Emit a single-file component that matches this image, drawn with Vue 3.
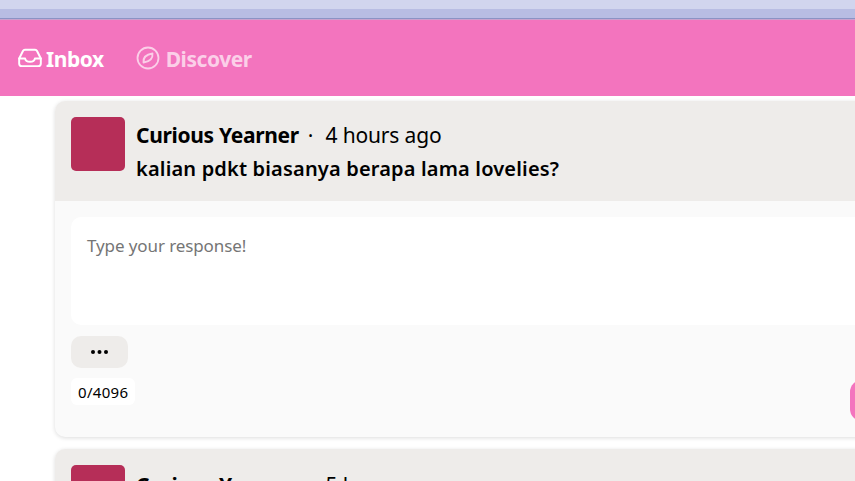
<script setup>
const posts = [
  { name: 'Curious Yearner', time: '4 hours ago', text: 'kalian pdkt biasanya berapa lama lovelies?', open: true },
  { name: 'Curious Yearner', time: '5 hours ago', text: '', open: false }
]
</script>

<template>
  <div class="page">
    <div class="strip-light"></div>
    <div class="strip-dark"></div>
    <div class="strip-edge"></div>
    <nav class="nav">
      <a class="tab active">
        <svg width="26" height="26" viewBox="0 0 24 24" fill="none" stroke="currentColor" stroke-width="1.8" stroke-linecap="round" stroke-linejoin="round">
          <path d="M2 12.5h5.5c.3 1.8 2 3 4.5 3s4.2-1.2 4.5-3H22" />
          <path d="M5.5 5.5A2 2 0 0 1 7.3 4.4h9.4a2 2 0 0 1 1.8 1.1L22 12.5V17a2.5 2.5 0 0 1-2.5 2.5h-15A2.5 2.5 0 0 1 2 17v-4.5z" />
        </svg>
        <span>Inbox</span>
      </a>
      <a class="tab">
        <svg class="compass" width="24" height="24" viewBox="0 0 24 24" fill="none" stroke="currentColor" stroke-width="1.8" stroke-linejoin="round">
          <circle cx="12" cy="12" r="10.5" />
          <path d="M16.5 7.5c.4 4-2 8-9 9-.4-4 2-8 9-9z" />
        </svg>
        <span>Discover</span>
      </a>
    </nav>
    <main class="list">
      <article v-for="(p, i) in posts" :key="i" class="card" :class="{ closed: !p.open }">
        <header class="head">
          <div class="avatar"></div>
          <div class="meta">
            <div class="line"><b>{{ p.name }}</b><span class="dot">·</span><span class="time">{{ p.time }}</span></div>
            <div v-if="p.text" class="question">{{ p.text }}</div>
          </div>
        </header>
        <div v-if="p.open" class="body">
          <div class="input">Type your response!</div>
          <button class="more" aria-label="More">
            <svg width="20" height="6" viewBox="0 0 20 6" fill="#000"><circle cx="3" cy="3" r="2" /><circle cx="9.5" cy="3" r="2" /><circle cx="16" cy="3" r="2" /></svg>
          </button>
          <div class="foot">
            <span class="count">0/4096</span>
            <button class="send" aria-label="Send"></button>
          </div>
        </div>
      </article>
    </main>
  </div>
</template>

<style scoped>
.page {
  width: 855px;
  height: 481px;
  overflow: hidden;
  background: #fff;
  font-family: "Noto Sans", "Open Sans", sans-serif;
  color: #000;
}
.strip-light { height: 9px; background: #d1d5ee; }
.strip-dark { height: 9px; background: #b8bde3; border-bottom: 1px solid #8b93c4; box-sizing: content-box; }
.strip-edge { height: 1px; background: #c9a2cc; }
.nav {
  height: 76px;
  background: #f374be;
  display: flex;
  align-items: center;
  gap: 32px;
  padding-left: 17px;
}
.tab {
  display: flex;
  align-items: center;
  gap: 3px;
  font-size: 21px;
  font-weight: 700;
  letter-spacing: -0.45px;
  color: #fbcfe8;
}
.tab.active { color: #fff; }
.tab .compass { margin-right: 3px; }
.tab span { position: relative; top: 1px; }
.list {
  width: 860px;
  margin: 5px 0 0 55px;
  display: flex;
  flex-direction: column;
  gap: 12px;
}
.card {
  width: 860px;
  border-radius: 10px;
  background: #fafafa;
  box-shadow: 0 1px 4px rgba(0, 0, 0, 0.14);
  overflow: hidden;
  flex: none;
}
.head {
  height: 100px;
  box-sizing: border-box;
  padding: 16px;
  background: #eeecea;
  display: flex;
  gap: 11px;
}
.avatar {
  width: 54px;
  height: 54px;
  flex: none;
  border-radius: 5px;
  background: #b62e58;
}
.meta { padding-top: 2px; }
.closed .meta { padding-top: 4px; }
.line { display: flex; align-items: center; font-size: 21px; line-height: 32px; }
.line b { font-weight: 700; letter-spacing: -0.33px; }
.dot { margin: 0 12px 0 9px; }
.time { letter-spacing: -0.15px; }
.question { font-size: 20px; font-weight: 600; line-height: 36px; letter-spacing: 0.17px; }
.body { padding: 16px; height: 236px; box-sizing: border-box; }
.input {
  width: 800px;
  height: 108px;
  box-sizing: border-box;
  padding: 17px 16px;
  background: #fff;
  border-radius: 10px;
  color: #757575;
  font-size: 17px;
  line-height: 24px;
  letter-spacing: -0.1px;
}
.more {
  display: flex;
  align-items: center;
  justify-content: center;
  width: 57px;
  height: 32px;
  margin-top: 11px;
  border: 0;
  padding: 0;
  border-radius: 10px;
  background: #eeecea;
}
.foot {
  display: flex;
  justify-content: space-between;
  align-items: flex-start;
  width: 819px;
  margin-top: 10px;
}
.count {
  background: #fff;
  border-radius: 6px;
  padding: 1px 7px 0;
  font-size: 15px;
  line-height: 26px;
  letter-spacing: 0.3px;
}
.send {
  width: 40px;
  height: 41px;
  margin-top: 2px;
  border: 0;
  border-radius: 12px;
  background: #f374be;
}
</style>
